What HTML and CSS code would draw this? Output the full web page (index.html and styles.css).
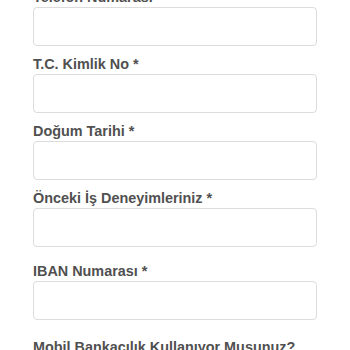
FILE: index.html
```html
<!DOCTYPE html>
<html lang="tr">
<head>
<meta charset="utf-8">
<link rel="stylesheet" href="styles.css">
</head>
<body>
<form class="form">
  <div class="field">
    <label class="label">Telefon Numarası</label>
    <input class="input" type="text">
  </div>
  <div class="field">
    <label class="label">T.C. Kimlik No *</label>
    <input class="input" type="text">
  </div>
  <div class="field">
    <label class="label">Doğum Tarihi *</label>
    <input class="input" type="text">
  </div>
  <div class="field">
    <label class="label">Önceki İş Deneyimleriniz *</label>
    <input class="input" type="text">
  </div>
  <div class="field field-wide">
    <label class="label">IBAN Numarası *</label>
    <input class="input" type="text">
  </div>
  <div class="section">
    <div class="label">Mobil Bankacılık Kullanıyor Musunuz?</div>
  </div>
</form>
</body>
</html>
```

FILE: styles.css
```css
html, body {
  margin: 0;
  padding: 0;
  background: #ffffff;
}
body {
  font-family: "Liberation Sans", Arial, Helvetica, sans-serif;
  overflow: hidden;
}
.form {
  display: flex;
  flex-direction: column;
  gap: 8px;
  margin: -13px 33px 0 33px;
}
.field {
  display: flex;
  flex-direction: column;
}
.field-wide {
  margin-top: 6px;
}
.label {
  display: block;
  font-size: 14.4px;
  line-height: 20px;
  font-weight: bold;
  color: #505050;
}
.input {
  display: block;
  box-sizing: border-box;
  width: 100%;
  height: 39px;
  margin: 0;
  border: 1px solid #dcdcdc;
  border-radius: 4px;
  background: #ffffff;
  font: inherit;
  outline: none;
}
.section {
  margin-top: 9px;
}
```
